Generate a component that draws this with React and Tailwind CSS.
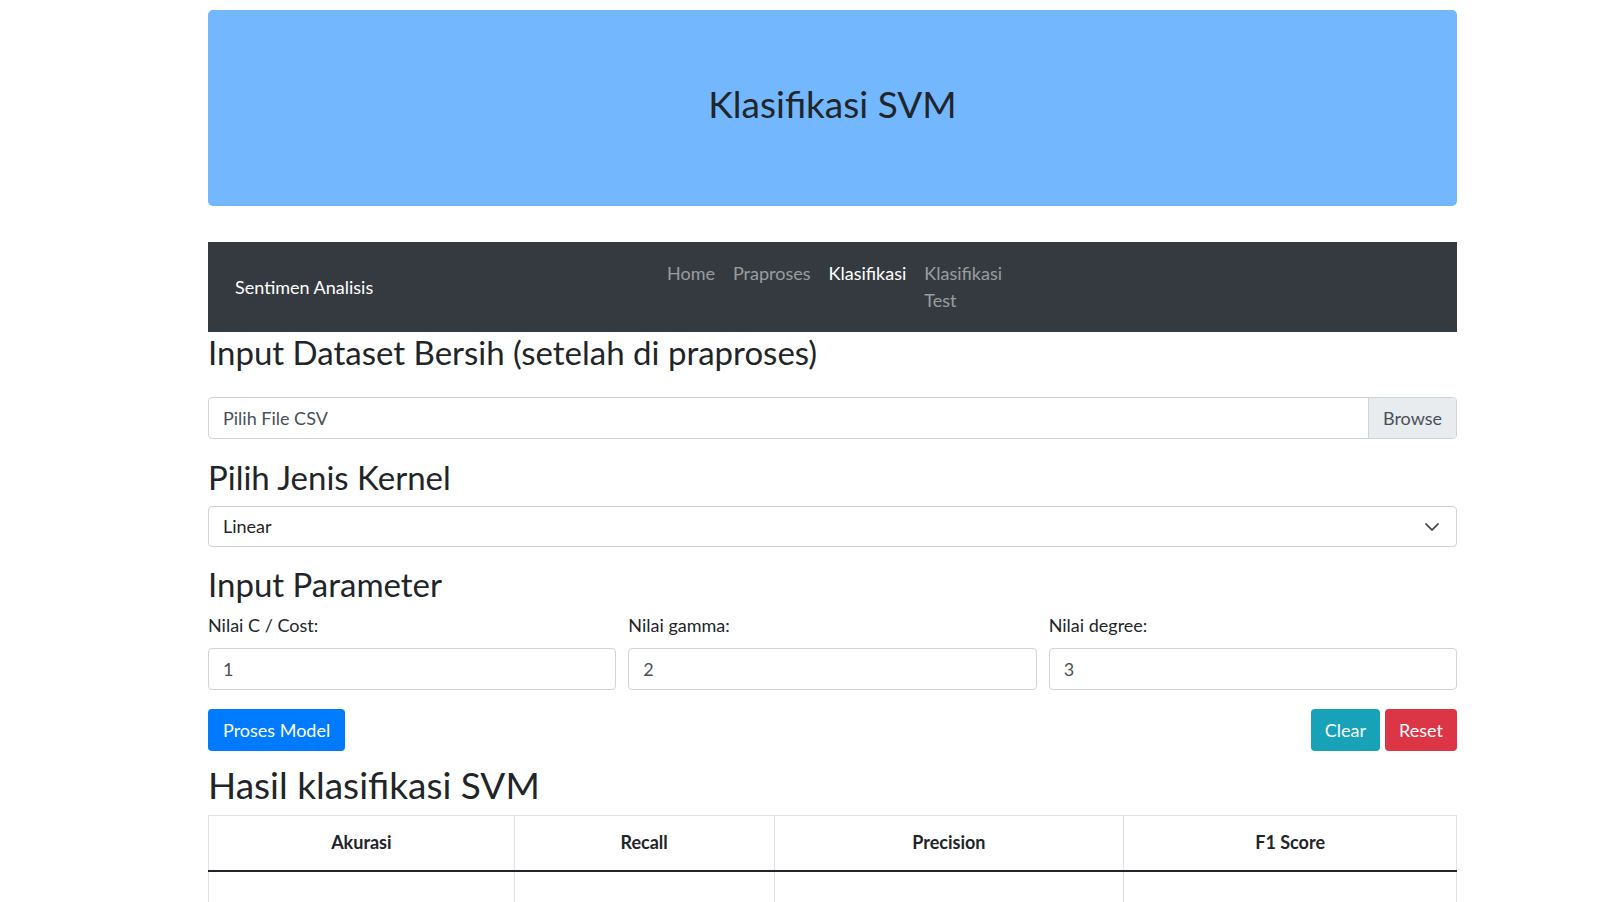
import { ChevronDown } from 'lucide-react'

const links = [
    { label: 'Home', active: false },
    { label: 'Praproses', active: false },
    { label: 'Klasifikasi', active: true },
    { label: 'Klasifikasi Test', active: false },
]

const params = [
    { label: 'Nilai C / Cost:', value: '1' },
    { label: 'Nilai gamma:', value: '2' },
    { label: 'Nilai degree:', value: '3' },
]

const columns = [
    { title: 'Akurasi', w: 'w-[306px]' },
    { title: 'Recall', w: 'w-[260px]' },
    { title: 'Precision', w: 'w-[350px]' },
    { title: 'F1 Score', w: 'w-[333px]' },
]

export default function App() {
    return (
        <div className="min-h-screen bg-white font-['Lato',sans-serif] text-[18px] text-[#212529]">
            <div className="ml-[208px] w-[1249px] pt-[10px]">
                {/* Jumbotron */}
                <div className="h-[196px] rounded-[5px] bg-[#73b7ff] flex items-center justify-center">
                    <h1 className="text-[37px] leading-[44px] font-normal mb-[8px]">Klasifikasi SVM</h1>
                </div>

                {/* Navbar */}
                <nav className="mt-[36px] h-[90px] bg-[#343a40] flex items-center pl-[27px]">
                    <div className="w-[423px] shrink-0 text-white text-[18px] leading-[27px]">Sentimen Analisis</div>
                    <ul className="flex items-start">
                        {links.map((l) => (
                            <li key={l.label} className={l.label === 'Klasifikasi Test' ? 'w-min' : ''}>
                                <a
                                    href="#"
                                    className={`block px-[9px] leading-[27px] ${l.active ? 'text-white' : 'text-white/50'}`}
                                >
                                    {l.label}
                                </a>
                            </li>
                        ))}
                    </ul>
                </nav>

                {/* Dataset */}
                <h2 className="text-[33px] leading-[40px] font-normal">Input Dataset Bersih (setelah di praproses)</h2>
                <div className="mt-[25px] h-[42px] flex border border-[#ced4da] rounded-[4px] overflow-hidden">
                    <div className="flex-1 flex items-center px-[14px] text-[#495057]">Pilih File CSV</div>
                    <div className="flex items-center px-[14px] bg-[#e9ecef] border-l border-[#ced4da] text-[#495057]">Browse</div>
                </div>

                {/* Kernel */}
                <h2 className="mt-[18px] text-[33px] leading-[40px] font-normal">Pilih Jenis Kernel</h2>
                <div className="mt-[9px] h-[41px] flex items-center justify-between border border-[#ced4da] rounded-[4px] pl-[14px] pr-[12px] text-[#212529]">
                    <span>Linear</span>
                    <ChevronDown className="w-[24px] h-[24px] text-[#343a40]" strokeWidth={1.75} />
                </div>

                {/* Parameter */}
                <h2 className="mt-[17px] text-[33px] leading-[40px] font-normal">Input Parameter</h2>
                <div className="mt-[8px] grid grid-cols-3 gap-x-[12px]">
                    {params.map((p) => (
                        <div key={p.label}>
                            <label className="block leading-[27px] mb-[9px]">{p.label}</label>
                            <div className="h-[42px] flex items-center border border-[#ced4da] rounded-[4px] px-[14px] text-[#495057]">{p.value}</div>
                        </div>
                    ))}
                </div>

                {/* Actions */}
                <div className="mt-[19px] flex items-center justify-between">
                    <button className="h-[42px] px-[15px] rounded-[4px] bg-[#007bff] text-white">Proses Model</button>
                    <div className="flex gap-[5px]">
                        <button className="h-[42px] px-[14px] rounded-[4px] bg-[#17a2b8] text-white">Clear</button>
                        <button className="h-[42px] px-[14px] rounded-[4px] bg-[#dc3545] text-white">Reset</button>
                    </div>
                </div>

                {/* Result */}
                <h2 className="mt-[12px] text-[37px] leading-[44px] font-normal">Hasil klasifikasi SVM</h2>
                <table className="mt-[8px] w-full border-collapse">
                    <thead>
                        <tr>
                            {columns.map((c) => (
                                <th key={c.title} className={`${c.w} h-[55px] border border-[#dee2e6] border-b-2 border-b-[#212529] font-bold text-center`}>
                                    {c.title}
                                </th>
                            ))}
                        </tr>
                    </thead>
                    <tbody>
                        <tr>
                            {columns.map((c) => (
                                <td key={c.title} className="h-[55px] border border-[#dee2e6]"></td>
                            ))}
                        </tr>
                    </tbody>
                </table>
            </div>
        </div>
    )
}
